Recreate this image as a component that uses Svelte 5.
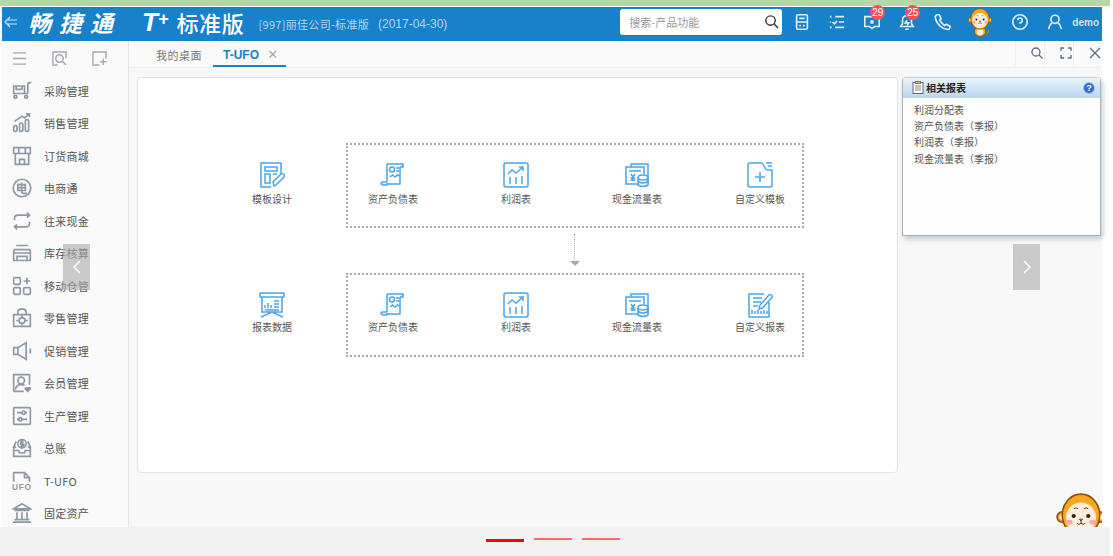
<script>
  const menu = [
    { name: '采购管理', icon: '<path d="M2 6h13v9H2zM5 6v4h7V6M1 15h18M19 15V3.5Q19 2 21 2h2"/><circle cx="4" cy="19" r="1.8"/><circle cx="17" cy="19" r="1.8"/>' },
    { name: '销售管理', icon: '<path d="M3 10 12 4l3 2 6-5M17 1h4v4"/><rect x="2" y="15" width="4" height="7" rx="2"/><rect x="9" y="12" width="4" height="10" rx="2"/><rect x="16" y="8" width="4" height="14" rx="2"/>' },
    { name: '订货商城', icon: '<path d="M2 2h20v7H2zM8 2v7M16 2v7M4 9v13h16V9M9 22v-6h6v6M9 13h.1M15 13h.1"/>' },
    { name: '电商通', icon: '<circle cx="12" cy="12" r="10.5"/><path d="M7 8h9v7H7zM7 11.5h9M11.5 5.5V16q0 2.5 2.5 2.500h4"/>' },
    { name: '往来现金', icon: '<path d="M18 2l3 3-3 3M21 5H7q-4 0-4 4v2M6 22l-3-3 3-3M3 19h14q4 0 4-4v-2"/>' },
    { name: '库存核算', icon: '<path d="M5 3h14M2 8h20M2 8v13h20V8M2 12h20M6 21v-5h12v5"/>' },
    { name: '移动仓管', icon: '<rect x="2" y="2" width="8" height="8" rx="1.500"/><rect x="2" y="14" width="8" height="8" rx="1.500"/><rect x="14" y="14" width="8" height="8" rx="1.500"/><path d="M18 2v8M14 6h8"/>' },
    { name: '零售管理', icon: '<path d="M2 8h20v14H2zM7 8V5q0-4 5-4t5 4v3"/><circle cx="12" cy="15" r="3.500"/><path d="M5 15h3.500M15.500 15H19M12 11v-2M12 19v2"/>' },
    { name: '促销管理', icon: '<path d="M2 8h5l10-6v20L7 16H2zM7 8v8M22 9v6"/>' },
    { name: '会员管理', icon: '<path d="M14 22H3q-1 0-1-1V2h19v12"/><circle cx="11" cy="9" r="4"/><path d="M4 20q1-6 7-6 3 0 4 1"/><path d="M19 22l-3-3q0-2 3-1 3-1 3 1z" fill="currentColor"/>' },
    { name: '生产管理', icon: '<rect x="2" y="2" width="20" height="20" rx="1"/><path d="M6 8h12M6 16h12"/><circle cx="14" cy="8" r="2" fill="#fafafa"/><circle cx="10" cy="16" r="2" fill="#fafafa"/>' },
    { name: '总账', icon: '<path d="M5 11H2l3-7M19 11h3l-3-7M2 11v11h20V11M2 15h6l1 3h6l1-3h6"/><circle cx="12" cy="7" r="5"/><path d="M14 5h-3.500v2.500H14V10h-4M12 1v12"/>' },
    { name: 'T-UFO', icon: '<path d="M2 13V2h13l6 6v5M15 2v6h6" /><text x="0" y="23" font-size="10" font-weight="700" font-family="Liberation Sans" fill="currentColor" stroke="none" letter-spacing=".8">UFO</text>' },
    { name: '固定资产', icon: '<path d="M12 1 2 7h20zM3 9h18M6 11v8M12 11v8M18 11v8M3 20h18M1 23h22"/>' }
  ];

  const scroll = '<path d="M7 2h16v3M7 2v18M21 2q2 0 2 3h-3M20 5v17H6"/><path d="M7 20H3q-2 0-2 1t2 2h3q2 0 2-2"/><circle cx="12" cy="7.500" r="2.500"/><path d="M16 6h3M16 9h3M10 15l2.500-2 2.500 2 2.500-2 2 1"/>';
  const chart = '<rect x="1" y="1" width="24" height="24" rx="2"/><path d="M5 12l4-4 4 3 7-6M16 5h4v4M7 22v-7M13 22v-7M19 22v-8"/>';
  const cash = '<path d="M7 5V2h17v19"/><path d="M15 22H2V5h18v7M5 9h12"/><path d="M7 12l2 3 2-3M9 15v4M6.500 16h5M6.500 18h5"/><ellipse cx="19" cy="15.500" rx="5" ry="2.500" fill="#fff"/><path d="M14 15.500V23q5 3 10 0v-7.500M14 19.500q5 3 10 0"/>';

  const rows = [
    {
      lead: { name: '模板设计', icon: '<path d="M22 12V1H2v24h10"/><path d="M6 5h12v4H6zM6 12h5v9H6zM14 12h4"/><path d="M15 24l-1-4 8-8q1-1 2.500 0t.5 3l-8 8z"/>' },
      items: [
        { name: '资产负债表', icon: scroll },
        { name: '利润表', icon: chart },
        { name: '现金流量表', icon: cash },
        { name: '自定义模板', icon: '<path d="M1 3q0-2 2-2h11q2 0 3 3l1 2q1 2 3 2h4v15q0 2-2 2H3q-2 0-2-2zM19 1h6M21 4h4M13 10v10M8 15h10"/>' }
      ]
    },
    {
      lead: { name: '报表数据', icon: '<path d="M1 1h24v4H1zM3 5v15h20V5M2 25l11-5 11 5"/><path d="M6 16v-3M9 16v-5M12 16v-3M15 9h5M15 12h5M15 15h5M6 18h14"/>' },
      items: [
        { name: '资产负债表', icon: scroll },
        { name: '利润表', icon: chart },
        { name: '现金流量表', icon: cash },
        { name: '自定义报表', icon: '<path d="M22 10v15H2V2h15"/><path d="M6 6h9M6 10h8M6 14h5"/><path d="M12 17l1-4 9-10q1-1 2.500 0t0 3l-9 10zM5 22v-4M8 22v-3M11 22v-4M14 22v-3M17 22v-4M20 22v-3" />' }
      ]
    }
  ];

  const related = ['利润分配表', '资产负债表（季报）', '利润表（季报）', '现金流量表（季报）'];
</script>

{#snippet face()}
  <circle cx="6" cy="25" r="5" fill="#f7a81b" stroke="#8a4f08" stroke-width="1.500"/>
  <circle cx="42" cy="25" r="5" fill="#f7a81b" stroke="#8a4f08" stroke-width="1.500"/>
  <circle cx="6" cy="25" r="2.500" fill="#fff"/>
  <circle cx="42" cy="25" r="2.500" fill="#fff"/>
  <ellipse cx="24" cy="23" rx="18" ry="20" fill="#f7a81b" stroke="#8a4f08" stroke-width="1.500"/>
  <ellipse cx="24" cy="26" rx="14.500" ry="15" fill="#fdeee0"/>
  <circle cx="17" cy="24" r="2" fill="#3d2208"/>
  <circle cx="31" cy="24" r="2" fill="#3d2208"/>
  <ellipse cx="12.500" cy="30" rx="3.500" ry="2.300" fill="#f9a9a4"/>
  <ellipse cx="35.500" cy="30" rx="3.500" ry="2.300" fill="#f9a9a4"/>
  <path d="M22.500 27h3L24 29zM24 29v2M20 31q2 2 4 0 2 2 4 0" fill="none" stroke="#3d2208" stroke-width=".8"/>
  <path d="M17 17q2-1.500 4 0M27 17q2-1.500 4 0" fill="none" stroke="#8a4f08" stroke-width="1"/>
{/snippet}

<div class="page">
  <div class="strip"></div>
  <header class="topbar">
    <svg class="back" viewBox="0 0 14 14"><path d="M6 2 1 7l5 5M3 5h10M3 9h10"/></svg>
    <span class="brand">畅捷通</span>
    <span class="tplus">T<sup>+</sup></span>
    <span class="edition">标准版</span>
    <span class="company">[997]丽佳公司-标准版</span>
    <span class="date">(2017-04-30)</span>

    <div class="search">
      <span>搜索-产品功能</span>
      <svg viewBox="0 0 16 16"><circle cx="7" cy="7" r="5"/><path d="m11 11 4 4"/></svg>
    </div>

    <div class="tools">
      <svg viewBox="0 0 20 20"><rect x="4" y="2" width="12" height="16" rx="1.500"/><path d="M4 10h12M7 6h6M7 14h2M11 14h2"/></svg>
      <svg viewBox="0 0 20 20"><path d="M2 4h2M8 4h10M2 10h1M5 10l2 2 3-3M12 10h6M2 16h2M8 16h10"/></svg>
      <div class="tool">
        <svg viewBox="0 0 20 20"><path d="M2 4h16v11h-5l-3 2-3-2H2z"/><circle cx="10" cy="10" r="1.200" fill="#fff"/></svg>
        <b class="badge">29</b>
      </div>
      <div class="tool">
        <svg viewBox="0 0 20 20"><path d="M3 15h14l-2-3V8q0-5-5-5T5 8v4zM8 18h4"/><path d="M10 8l-2 3h4l-2 3"/></svg>
        <b class="badge">25</b>
      </div>
      <svg viewBox="0 0 20 20"><path d="M4 2 2.500 4Q3 10 8 14.500t10 3.500l1-3-4-2.500-2 1.500Q10 12 7.500 8L9 6.500 7 2z"/></svg>
      <svg class="tool-monkey" viewBox="0 0 48 58">
        <path d="M34 50q8 2 6-6" fill="none" stroke="#c97a10" stroke-width="2.500"/>
        <ellipse cx="24" cy="47" rx="11" ry="10" fill="#f7a81b" stroke="#8a4f08" stroke-width="1.500"/>
        <ellipse cx="24" cy="48" rx="6.500" ry="7" fill="#fdeee0"/>
        {@render face()}
      </svg>
      <svg viewBox="0 0 20 20"><circle cx="10" cy="10" r="8"/><path d="M7.500 8q0-2.500 2.500-2.500t2.500 2.500-2.500 3v1M10 14.500v.1"/></svg>
      <svg viewBox="0 0 20 20"><circle cx="10" cy="7" r="4.500"/><path d="M3 18q1-6 4-7M17 18q-1-6-4-7"/></svg>
      <span class="user">demo</span>
    </div>
  </header>

  <div class="body">
    <aside class="sidebar">
      <div class="side-tools">
        <svg viewBox="0 0 16 16"><path d="M1 2h14M1 8h14M1 14h14"/></svg>
        <svg viewBox="0 0 16 16"><path d="M6 15H1V1h14v7"/><circle cx="8" cy="8" r="4"/><path d="m11 11 4 4"/></svg>
        <svg viewBox="0 0 16 16"><path d="M8 15H1V1h14v7"/><path d="M12 8v7M8.500 11.500h7"/></svg>
      </div>
      <nav>
        {#each menu as item}
          <div class="menu-item">
            <svg viewBox="0 0 24 24">{@html item.icon}</svg>
            <span>{item.name}</span>
          </div>
        {/each}
      </nav>
    </aside>

    <main class="main">
      <div class="tabbar">
        <span class="tab">我的桌面</span>
        <span class="tab active">T-UFO <i>✕</i></span>
        <div class="tab-tools">
          <svg viewBox="0 0 14 14"><circle cx="6" cy="6" r="4"/><path d="m9 9 3.500 3.500"/></svg>
          <svg viewBox="0 0 14 14"><path d="M2 5V2h3M9 2h3v3M12 9v3H9M5 12H2V9"/></svg>
          <svg viewBox="0 0 14 14"><path d="m2 2 10 10M12 2 2 12"/></svg>
        </div>
      </div>

      <div class="content">
        <section class="card">
          {#each rows as row, i}
            {#if i > 0}
              <div class="flow"></div>
            {/if}
            <div class="row">
              <div class="tile lead">
                <svg viewBox="0 0 26 26">{@html row.lead.icon}</svg>
                <span>{row.lead.name}</span>
              </div>
              <div class="group">
                {#each row.items as item}
                  <div class="tile">
                    <svg viewBox="0 0 26 26">{@html item.icon}</svg>
                    <span>{item.name}</span>
                  </div>
                {/each}
              </div>
            </div>
          {/each}
        </section>

        <section class="panel">
          <div class="panel-head">
            <svg viewBox="0 0 12 13"><rect x="1" y="1.500" width="10" height="11" fill="#fff" stroke="#667"/><rect x="3.500" y=".5" width="5" height="2" fill="#e8c25a" stroke="#776"/><path d="M3 5h6M3 7h6M3 9h6" stroke="#889"/></svg>
            <strong>相关报表</strong>
            <b class="help">?</b>
          </div>
          <ul>
            {#each related as r}
              <li>{r}</li>
            {/each}
          </ul>
        </section>
      </div>
    </main>
  </div>

  <footer class="pager">
    <span class="dash on"></span>
    <span class="dash"></span>
    <span class="dash"></span>
  </footer>

  <button class="nav prev" aria-label="上一页"><svg viewBox="0 0 10 16"><path d="M8 2 2 8l6 6"/></svg></button>
  <button class="nav next" aria-label="下一页"><svg viewBox="0 0 10 16"><path d="m2 2 6 6-6 6"/></svg></button>
  <svg class="float-monkey" viewBox="0 0 48 48">{@render face()}</svg>
</div>

<style>
  :global(body) {
    background: #fff;
  }
  .page {
    position: relative;
    height: 556px;
    width: 1113px;
    overflow: hidden;
    display: flex;
    flex-direction: column;
    font-family: "Noto Sans CJK SC", "Liberation Sans", sans-serif;
    font-size: 10px;
    color: #555;
  }
  svg {
    fill: none;
    stroke: currentColor;
    flex: none;
  }
  .strip {
    height: 6px;
    margin-bottom: 1px;
    width: 1110px;
    background: #b7d7a8;
  }

  .topbar {
    height: 34px;
    box-sizing: border-box;
    padding-bottom: 4px;
    margin: 0 11px 0 2px;
    background: #1781c9;
    color: #fff;
    display: flex;
    align-items: center;
    flex: none;
  }
  .back {
    width: 14px;
    height: 14px;
    margin-left: 2px;
    stroke-width: 1.200;
    opacity: .8;
  }
  .brand {
    margin-left: 10px;
    width: 96px;
    font-size: 23px;
    font-weight: 700;
    font-style: italic;
    letter-spacing: 8px;
    white-space: nowrap;
  }
  .tplus {
    margin-left: 18px;
    font-family: "Liberation Sans", sans-serif;
    font-size: 26px;
    font-weight: 700;
    font-style: italic;
    line-height: 20px;
  }
  .tplus sup {
    font-size: 18px;
    line-height: 0;
    vertical-align: 6px;
  }
  .edition {
    margin-left: 8px;
    font-size: 22px;
    letter-spacing: .7px;
    font-weight: 500;
    white-space: nowrap;
  }
  .company {
    margin: 4px 0 0 14px;
    font-size: 11px;
    letter-spacing: .3px;
    color: #b4d6ee;
    white-space: nowrap;
  }
  .date {
    margin: 4px 0 0 9px;
    font-size: 12px;
    font-family: "Liberation Sans", sans-serif;
    color: #b4d6ee;
  }
  .search {
    margin-left: auto;
    width: 162px;
    height: 26px;
    box-sizing: border-box;
    background: #fff;
    border-radius: 3px;
    padding: 0 3px 0 9px;
    display: flex;
    align-items: center;
    justify-content: space-between;
    color: #999;
    font-size: 11px;
  }
  .search svg {
    width: 15px;
    height: 15px;
    color: #333;
    stroke-width: 1.500;
    margin-bottom: 2px;
  }
  .tools {
    margin: 0 1px 0 11px;
    padding-right: 2px;
    display: flex;
    align-items: center;
    gap: 17px;
    color: #e2eff9;
    flex: none;
  }
  .tools svg {
    width: 18px;
    height: 18px;
    stroke-width: 1.800;
  }
  .tool {
    position: relative;
    height: 18px;
  }
  .badge {
    position: absolute;
    top: -8px;
    left: 7px;
    width: 15px;
    height: 15px;
    border-radius: 50%;
    background: #f0525f;
    color: #fff;
    font: 400 10px/15px "Liberation Sans", sans-serif;
    text-align: center;
  }
  .tools .tool-monkey {
    width: 26px;
    height: 30px;
    stroke: none;
    margin: 0 1px 0 -1px;
  }
  .user {
    margin-left: -9px;
    font: 700 10px "Liberation Sans", sans-serif;
    color: #cfe4f4;
  }

  .body {
    flex: 1;
    min-height: 0;
    margin: 0 11px 0 2px;
    display: flex;
    background: #f8f8f8;
  }
  .sidebar {
    width: 127px;
    flex: none;
    box-sizing: border-box;
    border-right: 1px solid #e4e6e8;
    background: #fafafa;
    overflow: hidden;
  }
  .side-tools {
    height: 33px;
    padding: 1px 0 0 10px;
    display: flex;
    align-items: center;
    gap: 25px;
    color: #a3a9b2;
  }
  .side-tools svg {
    width: 15px;
    height: 15px;
    stroke-width: 1.500;
  }
  nav {
    display: flex;
    flex-direction: column;
  }
  .menu-item {
    height: 32.500px;
    padding-left: 10px;
    display: flex;
    align-items: center;
    gap: 12px;
    color: #8f98a6;
    flex: none;
  }
  .menu-item svg {
    width: 20px;
    height: 20px;
    stroke-width: 2;
    margin-top: -1px;
  }
  .menu-item span {
    font-size: 11px;
    letter-spacing: .25px;
    color: #555;
    margin-top: -1px;
  }

  .main {
    flex: 1;
    min-width: 0;
    display: flex;
    flex-direction: column;
  }
  .tabbar {
    height: 27px;
    box-sizing: border-box;
    border-bottom: 1px solid #eeeeee;
    padding-left: 27px;
    display: flex;
    align-items: stretch;
    background: #fafafa;
    flex: none;
  }
  .tab {
    line-height: 28px;
    font-size: 11px;
    letter-spacing: .5px;
    color: #777;
  }
  .tab.active {
    margin-left: 11px;
    width: 73px;
    box-sizing: border-box;
    padding-left: 10px;
    height: 26px;
    border-bottom: 2px solid #1781c9;
    color: #1781c9;
    font-family: "Liberation Sans", sans-serif;
    font-size: 12px;
    letter-spacing: 0;
    font-weight: 700;
    white-space: nowrap;
  }
  .tab i {
    margin-left: 5px;
    font-size: 13px;
    font-style: normal;
    font-weight: 400;
    color: #aaa;
    font-family: "DejaVu Sans", sans-serif;
  }
  .tab-tools {
    margin-left: auto;
    display: flex;
    color: #5f6b80;
  }
  .tab-tools svg {
    width: 14px;
    height: 14px;
    padding: 5px 0 6px 14px;
    border-left: 1px solid #eee;
    stroke-width: 1.300;
  }

  .content {
    flex: 1;
    min-height: 0;
    padding: 9px 2px 0 8px;
    display: flex;
    align-items: flex-start;
    gap: 4px;
  }
  .card {
    width: 761px;
    height: 396px;
    box-sizing: border-box;
    background: #fff;
    border: 1px solid #e4e4e4;
    border-radius: 4px;
    padding-top: 65px;
    flex: none;
  }
  .row {
    display: flex;
    align-items: stretch;
  }
  .tile.lead {
    width: 208px;
    box-sizing: border-box;
    flex: none;
    padding: 0 0 4px 60px;
    justify-content: center;
  }
  .group {
    width: 458px;
    height: 85px;
    box-sizing: border-box;
    border: 2px dotted #aaa;
    padding: 0 0 4px 5px;
    display: grid;
    grid-template-columns: 123px 121px 123px 1fr;
    align-items: center;
  }
  .flow + .row .group {
    height: 84px;
  }
  .flow + .row .tile {
    gap: 1px;
  }
  .tile {
    width: 80px;
    display: flex;
    flex-direction: column;
    align-items: center;
    gap: 3px;
    color: #4aa5ea;
  }
  .tile svg {
    width: 26px;
    height: 26px;
    stroke-width: 1.500;
  }
  .tile span {
    font-size: 10px;
    line-height: 15px;
    color: #555;
    white-space: nowrap;
  }
  .flow {
    position: relative;
    height: 45px;
    margin-left: 436px;
    width: 1px;
  }
  .flow::before {
    content: "";
    position: absolute;
    top: 6px;
    height: 28px;
    left: 0;
    border-left: 1.500px dotted #aaa;
  }
  .flow::after {
    content: "";
    position: absolute;
    top: 33px;
    left: -4px;
    border: 5px solid transparent;
    border-top: 5px solid #aaa;
  }

  .panel {
    width: 199px;
    height: 159px;
    box-sizing: border-box;
    background: #fdfdfd;
    border: 1px solid #aab2ba;
    border-top-color: #c8d0d8;
    border-radius: 4px 4px 0 0;
    box-shadow: 2px 3px 5px rgba(90, 120, 150, .35);
    flex: none;
  }
  .panel-head {
    height: 20px;
    box-sizing: border-box;
    display: flex;
    align-items: center;
    padding: 0 5px 0 9px;
    background: linear-gradient(#e9f2fa, #bcd8f0);
    border-bottom: 1px solid #c6d6e4;
  }
  .panel-head svg {
    width: 12px;
    height: 13px;
  }
  .panel-head strong {
    margin-left: 2px;
    font-size: 10px;
    color: #222;
  }
  .help {
    margin-left: auto;
    width: 12px;
    height: 12px;
    border-radius: 50%;
    background: #2f6fd0;
    border: 1px solid #a7c3e4;
    box-sizing: border-box;
    color: #fff;
    font: 700 9px/10px "Liberation Sans", sans-serif;
    text-align: center;
  }
  ul {
    list-style: none;
    margin: 0;
    padding: 4px 0 0 11px;
  }
  li {
    height: 16.200px;
    line-height: 16.200px;
    font-size: 10px;
    color: #555;
  }

  .pager {
    height: 29px;
    margin-right: 3px;
    background: #f2f2f2;
    display: flex;
    flex: none;
    gap: 10px;
    padding: 11px 0 0 486px;
    box-sizing: border-box;
  }
  .dash {
    width: 38px;
    height: 1.500px;
    background: #ff6a6a;
  }
  .dash.on {
    height: 3px;
    margin-top: 1px;
    background: #f00;
  }

  .nav {
    position: absolute;
    top: 244px;
    width: 27px;
    height: 46px;
    padding: 0;
    border: 0;
    background: rgba(170, 170, 170, .6);
    color: #fff;
    display: flex;
    align-items: center;
    justify-content: center;
  }
  .nav svg {
    width: 10px;
    height: 16px;
    stroke-width: 1.500;
  }
  .prev {
    left: 63px;
  }
  .next {
    left: 1013px;
  }
  .float-monkey {
    position: absolute;
    left: 1056px;
    top: 491px;
    width: 50px;
    height: 50px;
    stroke: none;
    clip-path: inset(0 4px 14px 0);
  }
</style>
